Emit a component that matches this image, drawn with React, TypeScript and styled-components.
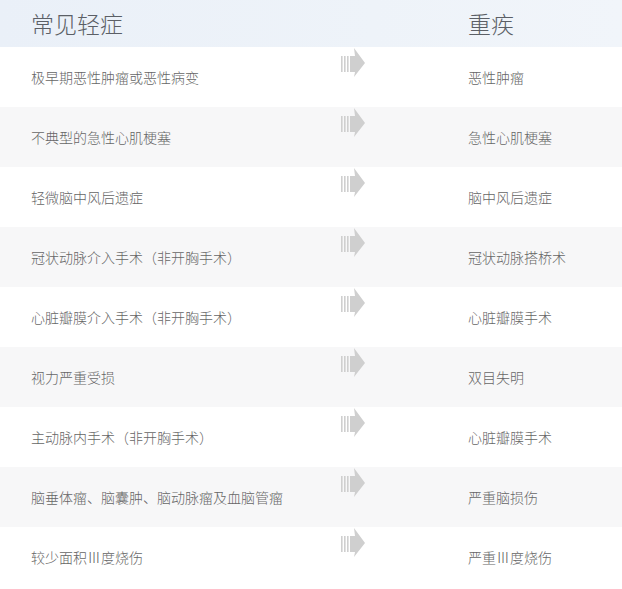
import React from "react";
import styled, { createGlobalStyle } from "styled-components";

const GlobalStyle = createGlobalStyle`
  body {
    margin: 0;
    background: #ffffff;
    font-family: "Noto Sans CJK SC", "Noto Sans", sans-serif;
  }
`;

const Table = styled.div`
  width: 622px;
  display: flex;
  flex-direction: column;
`;

const HeaderRow = styled.div`
  height: 47px;
  display: grid;
  grid-template-columns: 340px 128px 1fr;
  align-items: center;
  background: linear-gradient(90deg, #eaf0f8 0%, #eef3f9 60%, #f1f5fa 100%);
`;

const HeaderCell = styled.div<{ $pad?: number }>`
  font-size: 23px;
  font-weight: 300;
  color: #5b5f66;
  line-height: 1;
  padding-left: ${(p) => p.$pad ?? 0}px;
`;

const Row = styled.div<{ $shade: boolean }>`
  height: 60px;
  display: grid;
  grid-template-columns: 340px 128px 1fr;
  align-items: center;
  background: ${(p) => (p.$shade ? "#f7f7f8" : "#ffffff")};
`;

const Cell = styled.div<{ $pad?: number }>`
  font-size: 14px;
  font-weight: 300;
  color: #666666;
  line-height: 1;
  padding-left: ${(p) => p.$pad ?? 0}px;
  white-space: nowrap;
`;

const ArrowCell = styled.div`
  align-self: start;
  padding-top: 1px;
  display: flex;
`;

const Arrow = () => (
  <svg width="26" height="30" viewBox="0 0 26 30">
    <g fill="#cfcfcf">
      <rect x="1" y="8" width="1.6" height="16" />
      <rect x="4" y="8" width="1.6" height="16" />
      <rect x="7" y="8" width="1.6" height="16" />
      <path d="M10 8 H15 L14 0 L25 15 L14 29 L15 24 H10 Z" />
    </g>
  </svg>
);

const rows: [string, string][] = [
  ["极早期恶性肿瘤或恶性病变", "恶性肿瘤"],
  ["不典型的急性心肌梗塞", "急性心肌梗塞"],
  ["轻微脑中风后遗症", "脑中风后遗症"],
  ["冠状动脉介入手术（非开胸手术）", "冠状动脉搭桥术"],
  ["心脏瓣膜介入手术（非开胸手术）", "心脏瓣膜手术"],
  ["视力严重受损", "双目失明"],
  ["主动脉内手术（非开胸手术）", "心脏瓣膜手术"],
  ["脑垂体瘤、脑囊肿、脑动脉瘤及血脑管瘤", "严重脑损伤"],
  ["较少面积Ⅲ度烧伤", "严重Ⅲ度烧伤"],
];

const App = () => {
  return (
    <>
      <GlobalStyle />
      <Table>
        <HeaderRow>
          <HeaderCell $pad={31}>常见轻症</HeaderCell>
          <div />
          <HeaderCell>重疾</HeaderCell>
        </HeaderRow>
        {rows.map(([mild, severe], i) => (
          <Row key={i} $shade={i % 2 === 1}>
            <Cell $pad={31}>{mild}</Cell>
            <ArrowCell>
              <Arrow />
            </ArrowCell>
            <Cell>{severe}</Cell>
          </Row>
        ))}
      </Table>
    </>
  );
};

export default App;
